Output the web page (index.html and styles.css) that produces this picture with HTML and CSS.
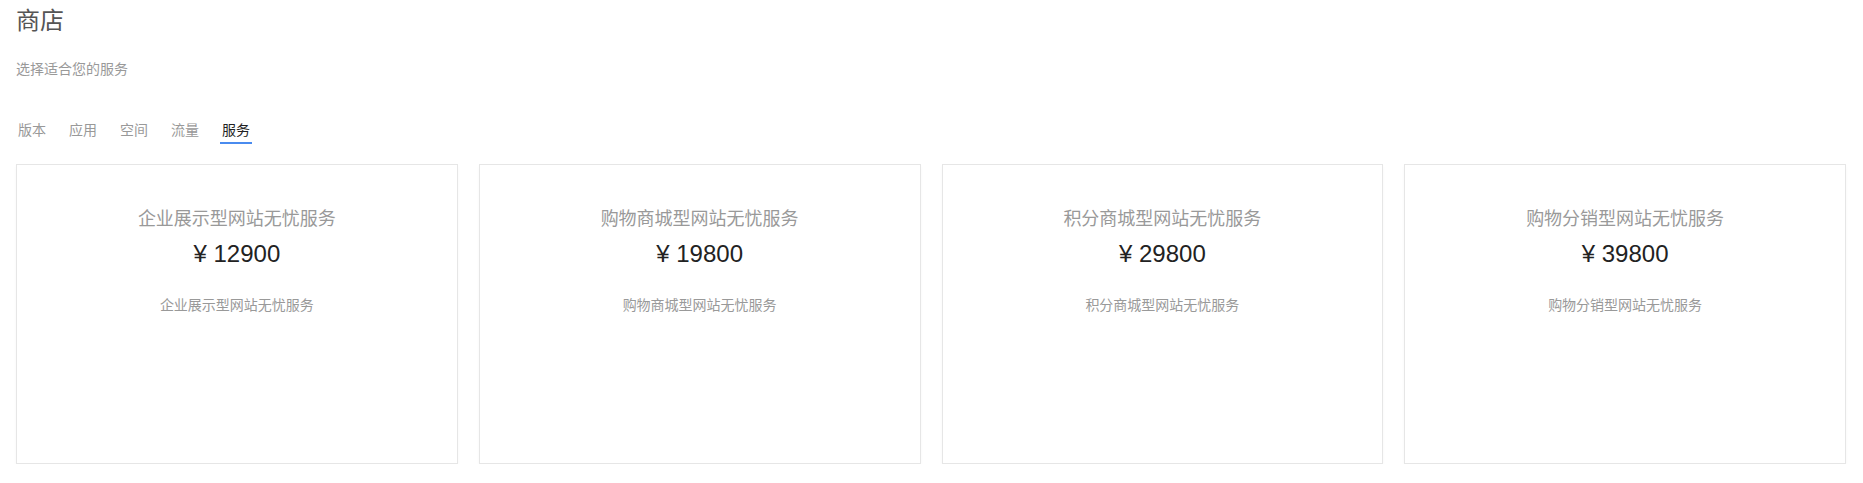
FILE: index.html
```html
<!DOCTYPE html>
<html lang="zh-CN">
<head>
    <meta charset="UTF-8">
    <meta name="viewport" content="width=device-width, initial-scale=1.0">
    <title>商店</title>
    <link rel="stylesheet" href="styles.css">
</head>
<body>
    <div class="page">
        <h1>商店</h1>
        <p class="subtitle">选择适合您的服务</p>

        <!-- Tabs -->
        <ul class="tabs">
            <li>版本</li>
            <li>应用</li>
            <li>空间</li>
            <li>流量</li>
            <li class="active">服务</li>
        </ul>

        <!-- Service cards -->
        <div class="cards">
            <div class="card">
                <div class="card-title">企业展示型网站无忧服务</div>
                <div class="card-price">¥ 12900</div>
                <div class="card-desc">企业展示型网站无忧服务</div>
            </div>
            <div class="card">
                <div class="card-title">购物商城型网站无忧服务</div>
                <div class="card-price">¥ 19800</div>
                <div class="card-desc">购物商城型网站无忧服务</div>
            </div>
            <div class="card">
                <div class="card-title">积分商城型网站无忧服务</div>
                <div class="card-price">¥ 29800</div>
                <div class="card-desc">积分商城型网站无忧服务</div>
            </div>
            <div class="card">
                <div class="card-title">购物分销型网站无忧服务</div>
                <div class="card-price">¥ 39800</div>
                <div class="card-desc">购物分销型网站无忧服务</div>
            </div>
        </div>
    </div>
</body>
</html>
```

FILE: styles.css
```css
body {
    font-family: "Liberation Sans", "Noto Sans CJK SC", sans-serif;
    margin: 0;
    padding: 0;
    background-color: #fff;
}
.page {
    padding: 5px 17px 0 16px;
}
h1 {
    margin: 0;
    font-size: 24px;
    line-height: 32px;
    font-weight: normal;
    color: #555;
}
.subtitle {
    margin: 22px 0 0;
    font-size: 14px;
    line-height: 20px;
    color: #999;
}
.tabs {
    list-style-type: none;
    display: flex;
    gap: 19px;
    margin: 41px 0 0;
    padding: 0;
}
.tabs li {
    padding: 0 2px 2px;
    font-size: 14px;
    line-height: 20px;
    color: #999;
    border-bottom: 2px solid transparent;
}
.tabs li.active {
    color: #222;
    border-bottom-color: #4a8bef;
}
.cards {
    display: grid;
    grid-template-columns: repeat(4, 1fr);
    gap: 21px;
    margin-top: 20px;
}
.card {
    height: 300px;
    box-sizing: border-box;
    padding-top: 41px;
    text-align: center;
    border: 1px solid #e6e6e6;
    box-shadow: 0 2px 3px rgba(0, 0, 0, 0.03);
}
.card-title {
    font-size: 18px;
    line-height: 26px;
    color: #999;
}
.card-price {
    margin-top: 6px;
    font-size: 24px;
    line-height: 32px;
    color: #222;
}
.card-desc {
    margin-top: 25px;
    font-size: 14px;
    line-height: 20px;
    color: #999;
}
```
